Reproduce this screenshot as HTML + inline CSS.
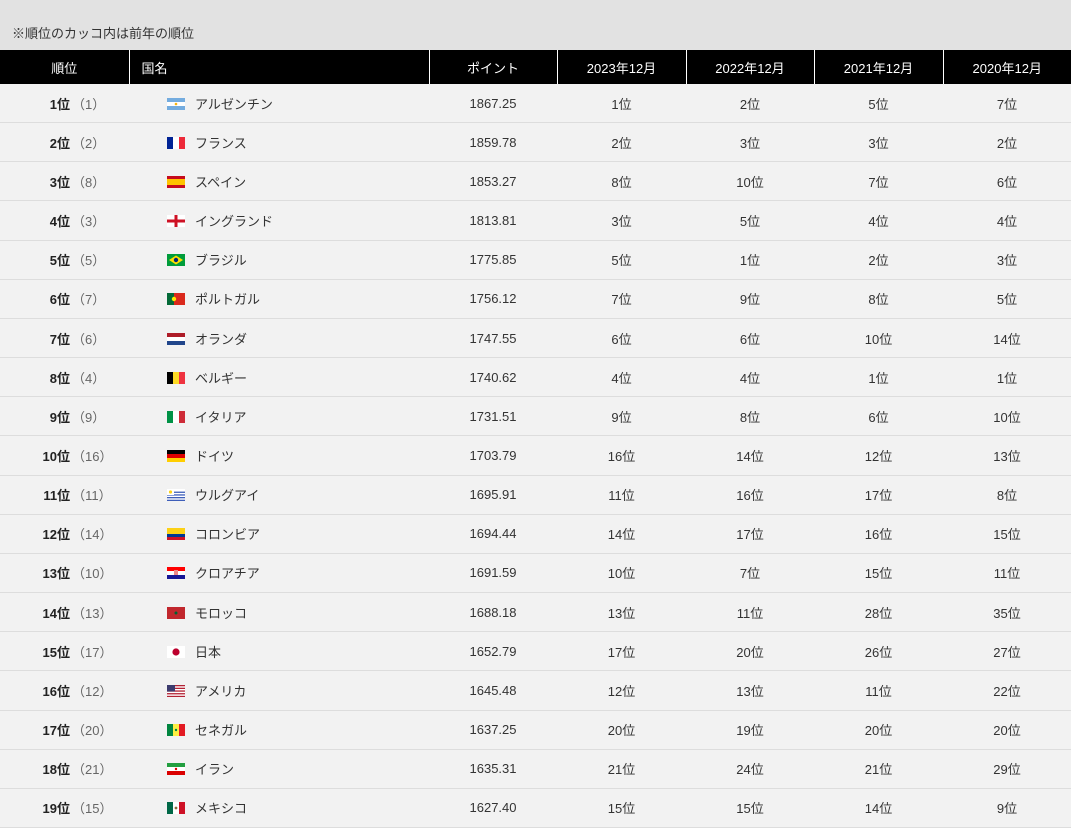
<!DOCTYPE html>
<html><head><meta charset="utf-8"><style>
body{margin:0;width:1071px;height:823px;overflow:hidden;background:#f2f2f2;font-family:"Liberation Sans","Noto Sans CJK JP",sans-serif;color:#333;font-size:13px}
.top{height:50px;background:#e2e2e2;position:relative}
.top span{position:absolute;left:12px;top:23px;font-size:13px;color:#333}
table{border-collapse:collapse;table-layout:fixed;width:1071px}
th{background:#000;color:#fff;font-weight:normal;height:34px;padding:0;border-left:1px solid #fff;font-size:13px}
th:first-child{border-left:none}
td{height:38.17px;border-bottom:1px solid #ddd;padding:0;text-align:center;font-size:13px;color:#333}
td.r{padding-left:26px}
td.r b{color:#222}
td.r span{color:#666;margin-left:2px}
td.n{text-align:left;padding-left:38px}
td.n svg{vertical-align:-1px;margin-right:10px}
</style></head><body>
<div class="top"><span>※順位のカッコ内は前年の順位</span></div>
<table>
<colgroup><col style="width:129px"><col style="width:300px"><col style="width:128px"><col style="width:129px"><col style="width:128px"><col style="width:129px"><col style="width:128px"></colgroup>
<tr><th>順位</th><th style="text-align:left;padding-left:12px">国名</th><th>ポイント</th><th>2023年12月</th><th>2022年12月</th><th>2021年12月</th><th>2020年12月</th></tr>
<tbody id="b">
<tr><td class="r"><b>1位</b><span>（1）</span></td><td class="n"><svg width="18" height="12"><rect width="18" height="12" fill="#74acdf"/><rect y="4" width="18" height="4" fill="#fff"/><circle cx="9" cy="6" r="1.3" fill="#f6b40e"/></svg>アルゼンチン</td><td>1867.25</td><td>1位</td><td>2位</td><td>5位</td><td>7位</td></tr>
<tr><td class="r"><b>2位</b><span>（2）</span></td><td class="n"><svg width="18" height="12"><rect width="6" height="12" fill="#002395"/><rect x="6" width="6" height="12" fill="#fff"/><rect x="12" width="6" height="12" fill="#ed2939"/></svg>フランス</td><td>1859.78</td><td>2位</td><td>3位</td><td>3位</td><td>2位</td></tr>
<tr><td class="r"><b>3位</b><span>（8）</span></td><td class="n"><svg width="18" height="12"><rect width="18" height="12" fill="#c60b1e"/><rect y="3" width="18" height="6" fill="#ffc400"/></svg>スペイン</td><td>1853.27</td><td>8位</td><td>10位</td><td>7位</td><td>6位</td></tr>
<tr><td class="r"><b>4位</b><span>（3）</span></td><td class="n"><svg width="18" height="12"><rect width="18" height="12" fill="#fff"/><rect x="7.5" width="3" height="12" fill="#ce1124"/><rect y="4.5" width="18" height="3" fill="#ce1124"/></svg>イングランド</td><td>1813.81</td><td>3位</td><td>5位</td><td>4位</td><td>4位</td></tr>
<tr><td class="r"><b>5位</b><span>（5）</span></td><td class="n"><svg width="18" height="12"><rect width="18" height="12" fill="#009c3b"/><path d="M9 1.5L16 6 9 10.5 2 6z" fill="#ffdf00"/><circle cx="9" cy="6" r="2.2" fill="#002776"/></svg>ブラジル</td><td>1775.85</td><td>5位</td><td>1位</td><td>2位</td><td>3位</td></tr>
<tr><td class="r"><b>6位</b><span>（7）</span></td><td class="n"><svg width="18" height="12"><rect width="18" height="12" fill="#da291c"/><rect width="7" height="12" fill="#046a38"/><circle cx="7" cy="6" r="2.2" fill="#ffe900"/></svg>ポルトガル</td><td>1756.12</td><td>7位</td><td>9位</td><td>8位</td><td>5位</td></tr>
<tr><td class="r"><b>7位</b><span>（6）</span></td><td class="n"><svg width="18" height="12"><rect width="18" height="4" fill="#ae1c28"/><rect y="4" width="18" height="4" fill="#fff"/><rect y="8" width="18" height="4" fill="#21468b"/></svg>オランダ</td><td>1747.55</td><td>6位</td><td>6位</td><td>10位</td><td>14位</td></tr>
<tr><td class="r"><b>8位</b><span>（4）</span></td><td class="n"><svg width="18" height="12"><rect width="6" height="12" fill="#000"/><rect x="6" width="6" height="12" fill="#fdda24"/><rect x="12" width="6" height="12" fill="#ef3340"/></svg>ベルギー</td><td>1740.62</td><td>4位</td><td>4位</td><td>1位</td><td>1位</td></tr>
<tr><td class="r"><b>9位</b><span>（9）</span></td><td class="n"><svg width="18" height="12"><rect width="6" height="12" fill="#009246"/><rect x="6" width="6" height="12" fill="#fff"/><rect x="12" width="6" height="12" fill="#ce2b37"/></svg>イタリア</td><td>1731.51</td><td>9位</td><td>8位</td><td>6位</td><td>10位</td></tr>
<tr><td class="r"><b>10位</b><span>（16）</span></td><td class="n"><svg width="18" height="12"><rect width="18" height="4" fill="#000"/><rect y="4" width="18" height="4" fill="#dd0000"/><rect y="8" width="18" height="4" fill="#ffce00"/></svg>ドイツ</td><td>1703.79</td><td>16位</td><td>14位</td><td>12位</td><td>13位</td></tr>
<tr><td class="r"><b>11位</b><span>（11）</span></td><td class="n"><svg width="18" height="12"><rect width="18" height="12" fill="#fff"/><rect y="2.6" width="18" height="1.3" fill="#3e5eb9"/><rect y="5.3" width="18" height="1.3" fill="#3e5eb9"/><rect y="8" width="18" height="1.3" fill="#3e5eb9"/><rect y="10.7" width="18" height="1.3" fill="#3e5eb9"/><rect width="7" height="6" fill="#fff"/><circle cx="3.5" cy="3" r="1.6" fill="#fcd116"/></svg>ウルグアイ</td><td>1695.91</td><td>11位</td><td>16位</td><td>17位</td><td>8位</td></tr>
<tr><td class="r"><b>12位</b><span>（14）</span></td><td class="n"><svg width="18" height="12"><rect width="18" height="6" fill="#fcd116"/><rect y="6" width="18" height="3" fill="#003893"/><rect y="9" width="18" height="3" fill="#ce1126"/></svg>コロンビア</td><td>1694.44</td><td>14位</td><td>17位</td><td>16位</td><td>15位</td></tr>
<tr><td class="r"><b>13位</b><span>（10）</span></td><td class="n"><svg width="18" height="12"><rect width="18" height="4" fill="#ff0000"/><rect y="4" width="18" height="4" fill="#fff"/><rect y="8" width="18" height="4" fill="#171796"/><rect x="7" y="3" width="4" height="5" fill="#e88"/></svg>クロアチア</td><td>1691.59</td><td>10位</td><td>7位</td><td>15位</td><td>11位</td></tr>
<tr><td class="r"><b>14位</b><span>（13）</span></td><td class="n"><svg width="18" height="12"><rect width="18" height="12" fill="#c1272d"/><circle cx="9" cy="6" r="1.5" fill="#006233"/></svg>モロッコ</td><td>1688.18</td><td>13位</td><td>11位</td><td>28位</td><td>35位</td></tr>
<tr><td class="r"><b>15位</b><span>（17）</span></td><td class="n"><svg width="18" height="12"><rect width="18" height="12" fill="#fff"/><circle cx="9" cy="6" r="3.6" fill="#bc002d"/></svg>日本</td><td>1652.79</td><td>17位</td><td>20位</td><td>26位</td><td>27位</td></tr>
<tr><td class="r"><b>16位</b><span>（12）</span></td><td class="n"><svg width="18" height="12"><rect width="18" height="12" fill="#fff"/><rect y="0" width="18" height="1.3" fill="#b22234"/><rect y="2.7" width="18" height="1.3" fill="#b22234"/><rect y="5.4" width="18" height="1.3" fill="#b22234"/><rect y="8.1" width="18" height="1.3" fill="#b22234"/><rect y="10.8" width="18" height="1.2" fill="#b22234"/><rect width="8" height="6.5" fill="#3c3b6e"/></svg>アメリカ</td><td>1645.48</td><td>12位</td><td>13位</td><td>11位</td><td>22位</td></tr>
<tr><td class="r"><b>17位</b><span>（20）</span></td><td class="n"><svg width="18" height="12"><rect width="6" height="12" fill="#00853f"/><rect x="6" width="6" height="12" fill="#fdef42"/><rect x="12" width="6" height="12" fill="#e31b23"/><circle cx="9" cy="6" r="1.2" fill="#00853f"/></svg>セネガル</td><td>1637.25</td><td>20位</td><td>19位</td><td>20位</td><td>20位</td></tr>
<tr><td class="r"><b>18位</b><span>（21）</span></td><td class="n"><svg width="18" height="12"><rect width="18" height="4" fill="#239f40"/><rect y="4" width="18" height="4" fill="#fff"/><rect y="8" width="18" height="4" fill="#da0000"/><circle cx="9" cy="6" r="1.2" fill="#da0000"/></svg>イラン</td><td>1635.31</td><td>21位</td><td>24位</td><td>21位</td><td>29位</td></tr>
<tr><td class="r"><b>19位</b><span>（15）</span></td><td class="n"><svg width="18" height="12"><rect width="6" height="12" fill="#006847"/><rect x="6" width="6" height="12" fill="#fff"/><rect x="12" width="6" height="12" fill="#ce1126"/><circle cx="9" cy="6" r="1.4" fill="#8c6a3a"/></svg>メキシコ</td><td>1627.40</td><td>15位</td><td>15位</td><td>14位</td><td>9位</td></tr>
</tbody></table>
</body></html>
